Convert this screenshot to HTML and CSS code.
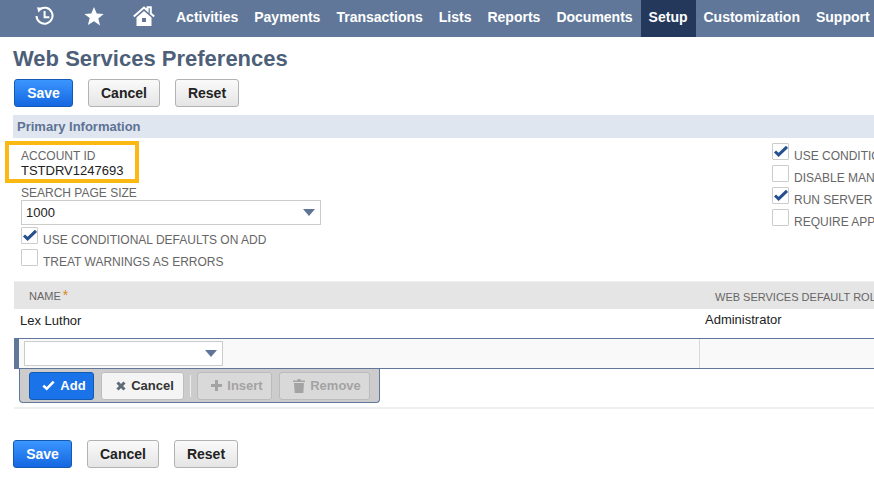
FILE: index.html
```html
<!DOCTYPE html>
<html lang="en">
<head>
<meta charset="utf-8">
<title>Web Services Preferences</title>
<link rel="stylesheet" href="styles.css">
</head>
<body>
<nav class="nav">
  <span class="nav-icon icon-history"><svg width="19" height="20" viewBox="0 0 19 20"><path d="M4.3 3.6A8 8 0 1 1 1.5 10" fill="none" stroke="#fff" stroke-width="2"/><path d="M2 1.2l6 .8-4.6 4.4z" fill="#fff"/><path d="M9.6 5v6.2h4.8" fill="none" stroke="#fff" stroke-width="2"/></svg></span>
  <span class="nav-icon icon-star"><svg width="20" height="19" viewBox="0 0 20 19"><path d="M10 0l2.7 6.5 7 .5-5.4 4.5 1.8 6.9L10 14.2l-6.1 3.7 1.8-6.9L.3 7l7-.5z" fill="#fff"/></svg></span>
  <span class="nav-icon icon-home"><svg width="22" height="21" viewBox="0 0 22 21"><path d="M0.8 10.6L11 1.6l3.6 3.1V1.2h3.2v6.3l3.4 3.1" fill="none" stroke="#fff" stroke-width="2"/><path d="M3.5 11.5L11 5l7.5 6.5V20h-15zM9 12v4h4v-4z" fill="#fff" fill-rule="evenodd"/></svg></span>
  <a class="nav-item">Activities</a>
  <a class="nav-item">Payments</a>
  <a class="nav-item">Transactions</a>
  <a class="nav-item">Lists</a>
  <a class="nav-item">Reports</a>
  <a class="nav-item">Documents</a>
  <a class="nav-item nav-active">Setup</a>
  <a class="nav-item">Customization</a>
  <a class="nav-item">Support</a>
</nav>

<main class="page">
  <h1 class="title">Web Services Preferences</h1>
  <div class="buttons buttons-top">
    <button class="btn btn-primary">Save</button>
    <button class="btn">Cancel</button>
    <button class="btn">Reset</button>
  </div>

  <div class="section-bar">Primary Information</div>

  <div class="form">
    <div class="form-left">
      <div class="highlight">
        <div class="label">ACCOUNT ID</div>
        <div class="value">TSTDRV1247693</div>
      </div>
      <div class="label label-search">SEARCH PAGE SIZE</div>
      <div class="select select-wide">
        <span class="select-text">1000</span>
        <span class="caret"></span>
      </div>
      <div class="check-row check-first"><span class="check"><svg class="tick" width="16" height="14" viewBox="0 0 16 14"><path d="M2 7.5l3.6 3.4L14 2.8" fill="none" stroke="#24508f" stroke-width="3"/></svg></span><span class="check-label">USE CONDITIONAL DEFAULTS ON ADD</span></div>
      <div class="check-row"><span class="check"></span><span class="check-label">TREAT WARNINGS AS ERRORS</span></div>
    </div>
    <div class="form-right">
      <div class="check-row"><span class="check"><svg class="tick" width="16" height="14" viewBox="0 0 16 14"><path d="M2 7.5l3.6 3.4L14 2.8" fill="none" stroke="#24508f" stroke-width="3"/></svg></span><span class="check-label">USE CONDITIONAL DEFAULTS ON UPDATE</span></div>
      <div class="check-row"><span class="check"></span><span class="check-label">DISABLE MANDATORY CUSTOM FIELD VALIDATION</span></div>
      <div class="check-row"><span class="check"><svg class="tick" width="16" height="14" viewBox="0 0 16 14"><path d="M2 7.5l3.6 3.4L14 2.8" fill="none" stroke="#24508f" stroke-width="3"/></svg></span><span class="check-label">RUN SERVER SUITESCRIPT AND TRIGGER WORKFLOWS</span></div>
      <div class="check-row"><span class="check"></span><span class="check-label">REQUIRE APPLICATION ID</span></div>
    </div>
  </div>

  <div class="sublist">
    <div class="grid-row head-row">
      <div class="cell-name head-name">NAME<span class="req">*</span></div>
      <div class="cell-role head-role">WEB SERVICES DEFAULT ROLE</div>
    </div>
    <div class="grid-row data-row">
      <div class="cell-name data-name">Lex Luthor</div>
      <div class="cell-role data-role">Administrator</div>
    </div>
    <div class="grid-row edit-row">
      <div class="cell-name edit-name">
        <div class="select select-small"><span class="caret"></span></div>
      </div>
      <div class="cell-role edit-role"></div>
    </div>
    <div class="toolbar">
      <button class="tbtn tbtn-primary"><svg width="13" height="11" viewBox="0 0 13 11"><path d="M1.3 5.6l3.4 3.2L11.7 1.6" fill="none" stroke="#fff" stroke-width="2.6"/></svg>Add</button>
      <button class="tbtn"><svg width="10" height="10" viewBox="0 0 10 10"><path d="M1.5 1.5l7 7M8.5 1.5l-7 7" fill="none" stroke="#5f6b78" stroke-width="3"/></svg>Cancel</button>
      <span class="tsep"></span>
      <button class="tbtn tbtn-off tbtn-insert"><svg width="11" height="11" viewBox="0 0 11 11"><path d="M5.5 0v11M0 5.5h11" fill="none" stroke="#a3a3a3" stroke-width="3"/></svg>Insert</button>
      <button class="tbtn tbtn-off tbtn-remove"><svg width="12" height="14" viewBox="0 0 12 14"><path d="M0 1.5h12v1.5H0zM4.5 0h3v1.5h-3zM1 4h10l-.7 10H1.7z" fill="#a3a3a3"/></svg>Remove</button>
    </div>
  </div>

  <div class="buttons buttons-bottom">
    <button class="btn btn-primary">Save</button>
    <button class="btn">Cancel</button>
    <button class="btn">Reset</button>
  </div>
</main>
</body>
</html>
```

FILE: styles.css
```css
* { box-sizing: border-box; }
html, body { margin: 0; padding: 0; }
body {
  width: 874px;
  height: 480px;
  overflow: hidden;
  background: #fff;
  font-family: "Liberation Sans", Arial, sans-serif;
  color: #222;
}

.nav {
  display: flex;
  align-items: stretch;
  height: 37px;
  width: 874px;
  overflow: hidden;
  background: #607799;
  padding-left: 35px;
}
.nav-icon { display: flex; align-items: center; flex: none; padding-bottom: 5px; }
.icon-history { width: 49px; }
.icon-star { width: 49px; }
.icon-home { width: 35px; }
.nav-item {
  display: flex;
  align-items: center;
  flex: none;
  padding: 0 8px 3px;
  color: #fff;
  font-size: 14px;
  font-weight: bold;
}
.nav-active { background: #24385b; }

.page { padding-left: 13px; }
.title {
  margin: 0;
  padding-top: 9px;
  height: 42px;
  font-size: 22px;
  line-height: 26px;
  font-weight: bold;
  color: #4d5f79;
}

.buttons { display: flex; gap: 15px; }
.buttons-top { padding-left: 1px; }
.buttons-bottom { margin-top: 31px; }
.btn {
  height: 28px;
  padding: 0 12px;
  border: 1px solid #b2b2b2;
  border-radius: 3px;
  background: linear-gradient(#fafafa, #e5e5e5);
  color: #222;
  font: bold 14px "Liberation Sans", Arial, sans-serif;
}
.btn-primary {
  width: 59px;
  padding: 0;
  border-color: #125ab2;
  background: linear-gradient(#3b96ff, #1467e0);
  color: #fff;
}

.section-bar {
  height: 23px;
  margin-top: 8px;
  padding-left: 4px;
  background: #e0e6ef;
  color: #5d7295;
  font-size: 13px;
  font-weight: bold;
  line-height: 23px;
}

.form { display: flex; height: 143px; }
.form-left { width: 759px; flex: none; }
.form-right { padding-top: 4px; min-width: 0; white-space: nowrap; }

.highlight {
  width: 134px;
  height: 42px;
  margin: 3px 0 0 -8px;
  padding: 4px 0 0 12px;
  border: 4px solid #fdb913;
  white-space: nowrap;
}
.label {
  font-size: 12px;
  line-height: 14px;
  color: #666;
}
.value {
  font-size: 13px;
  line-height: 15px;
  color: #222;
}
.label-search { margin: 3px 0 0 8px; }

.select {
  position: relative;
  background: #fff;
  border: 1px solid #ccc;
}
.select-wide {
  width: 300px;
  height: 25px;
  margin: 0 0 0 8px;
  padding-left: 4px;
  font-size: 13px;
  line-height: 24px;
  color: #222;
}
.select-small { width: 199px; height: 25px; }
.caret {
  position: absolute;
  top: 8px;
  right: 5px;
  width: 0;
  height: 0;
  border-left: 6.5px solid transparent;
  border-right: 6.5px solid transparent;
  border-top: 7px solid #5f7598;
}

.check-row {
  display: flex;
  align-items: flex-end;
  height: 22px;
}
.form-left .check-row { margin-left: 8px; }
.check-first { margin-top: 1px; }
.check {
  position: relative;
  flex: none;
  width: 17px;
  height: 17px;
  margin-bottom: 4px;
  border: 1px solid #ccc;
  border-radius: 1px;
  background: #fff;
}
.tick { position: absolute; left: 0; top: 0; }
.check-label {
  margin-left: 5px;
  font-size: 12px;
  line-height: 14px;
  color: #666;
  padding-bottom: 1px;
}

.sublist { height: 128px; border-bottom: 2px solid #eee; margin-left: 1px; }
.grid-row { display: flex; white-space: nowrap; }
.cell-name { width: 685px; flex: none; }
.cell-role { flex: 1; min-width: 0; }

.head-row {
  height: 28px;
  background: #e5e5e5;
  border-top: 1px solid #eee;
  font-size: 11px;
  color: #666;
  line-height: 28px;
}
.head-name { padding-left: 15px; }
.req { color: #d68a1c; font-size: 14px; line-height: 0; margin-left: 2px; position: relative; }
.head-role { padding: 1px 0 0 16px; }

.data-row {
  height: 29px;
  font-size: 13px;
  line-height: 24px;
  color: #222;
}
.data-name { padding-left: 6px; }
.data-role { padding-left: 6px; line-height: 22px; }

.edit-row {
  height: 31px;
  background: #f9f9f9;
  border-top: 1px solid #607799;
  border-bottom: 1px solid #607799;
}
.edit-name { padding: 2px 0 0 5px; border-left: 5px solid #607799; }
.edit-role { border-left: 1px solid #d9d9d9; }

.toolbar {
  display: flex;
  align-items: center;
  gap: 7px;
  width: 361px;
  height: 34px;
  margin-left: 5px;
  padding-left: 9px;
  background: #ccc;
  border: 1px solid #607799;
  border-top: 0;
  border-radius: 0 0 4px 4px;
}
.tbtn {
  display: flex;
  align-items: center;
  justify-content: center;
  gap: 5px;
  height: 28px;
  width: 83px;
  padding: 0 0 0 5px;
  border: 1px solid #bdbdbd;
  border-radius: 3px;
  background: #f4f4f4;
  color: #333;
  font: bold 13px "Liberation Sans", Arial, sans-serif;
}
.tbtn-primary {
  width: 65px;
  background: #1a73e8;
  border-color: #125ab2;
  color: #fff;
}
.tsep { width: 1px; height: 22px; background: #eee; margin: 0 -1px; }
.tbtn-off { background: #d9d9d9; color: #a3a3a3; border-color: #bbb; }
.tbtn-insert { width: 75px; }
.tbtn-remove { width: 91px; margin-left: 0; }
```
